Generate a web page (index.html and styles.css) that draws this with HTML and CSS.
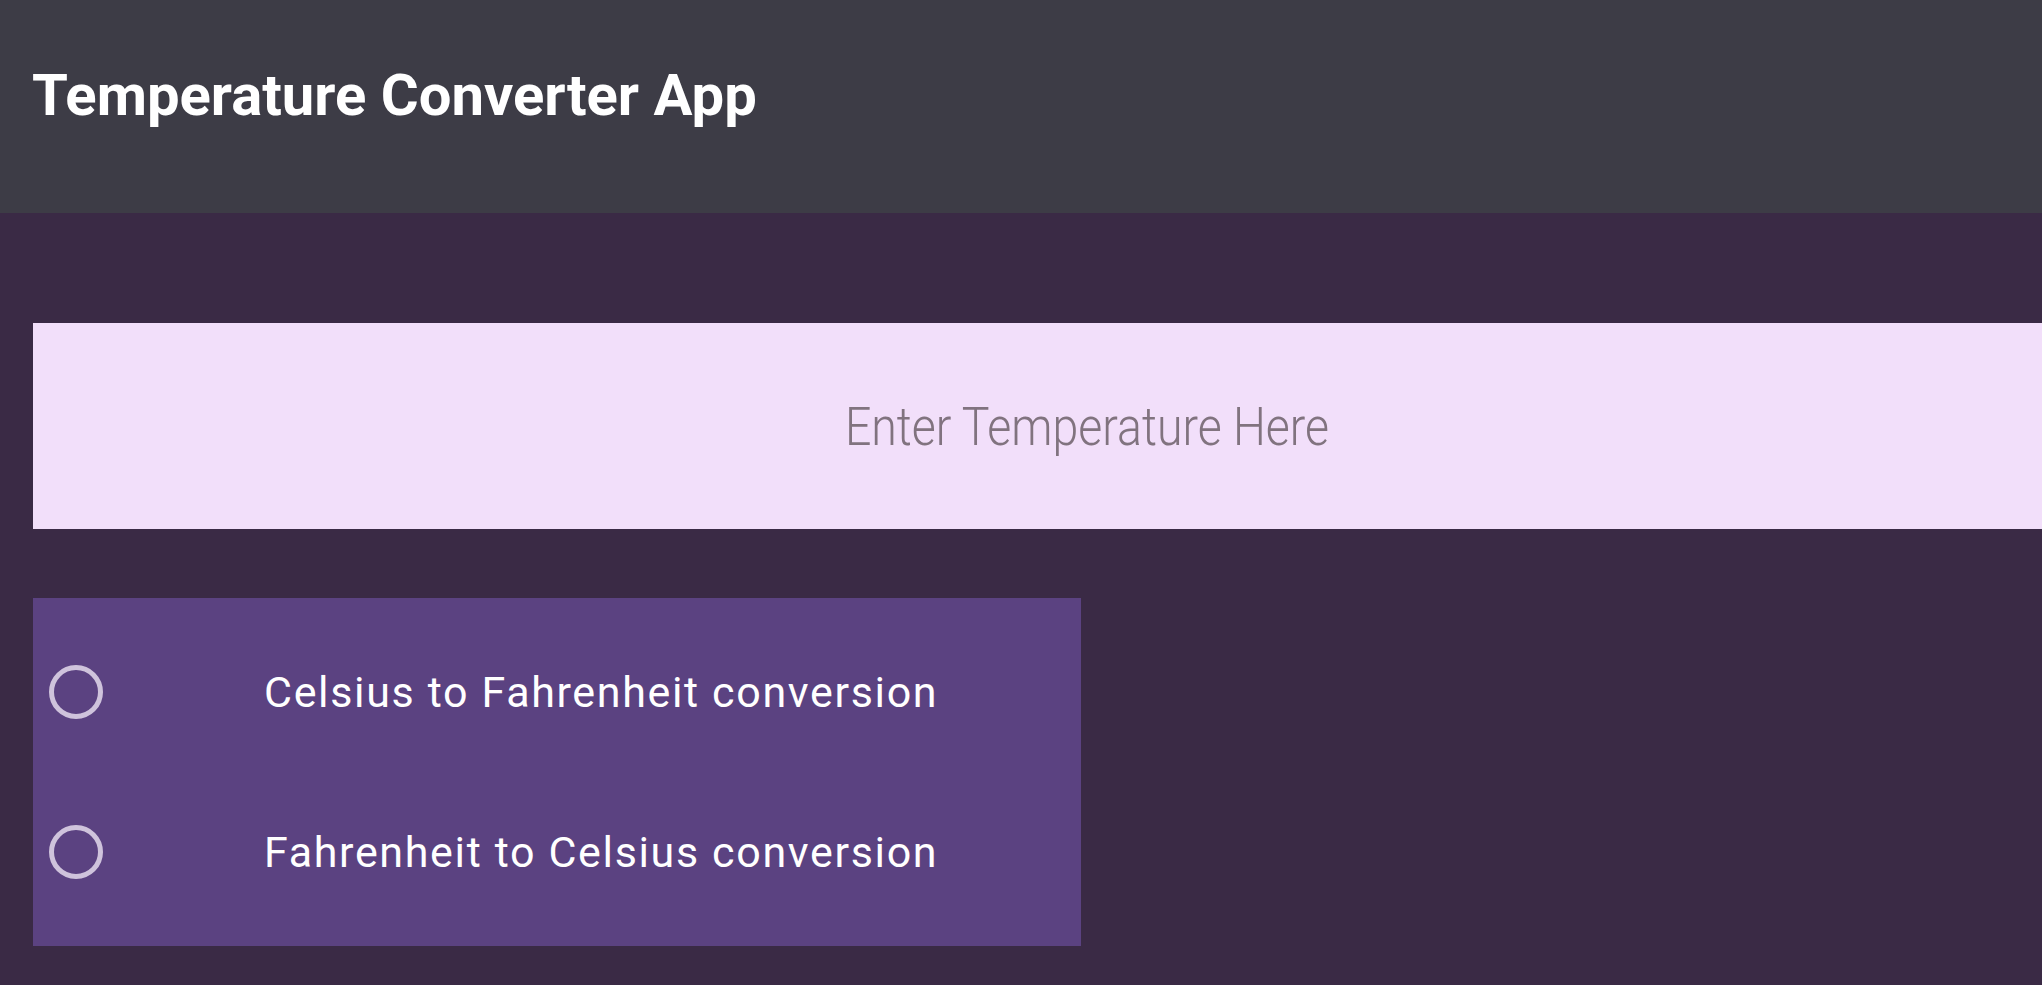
FILE: index.html
```html
<!DOCTYPE html>
<html lang="en">
<head>
<meta charset="utf-8">
<title>Temperature Converter App</title>
<link rel="stylesheet" href="styles.css">
</head>
<body>
<header class="app-bar">
  <h1 class="app-title">Temperature Converter App</h1>
</header>
<main class="content">
  <div class="field">
    <input class="temp-input" type="text" placeholder="Enter Temperature Here">
  </div>
  <div class="radio-group">
    <label class="radio-row">
      <span class="radio-circle"></span>
      <span class="radio-text">Celsius to Fahrenheit conversion</span>
    </label>
    <label class="radio-row">
      <span class="radio-circle"></span>
      <span class="radio-text">Fahrenheit to Celsius conversion</span>
    </label>
  </div>
</main>
</body>
</html>
```
FILE: styles.css
```css
html, body {
  margin: 0;
  padding: 0;
  height: 100%;
  overflow: hidden;
}
body {
  background: #3a2a45;
  font-family: Roboto, "Noto Sans", sans-serif;
}
.app-bar {
  height: 213px;
  background: #3d3c46;
  display: flex;
  align-items: center;
  padding-left: 32px;
  box-sizing: border-box;
}
.app-title {
  margin: 0;
  margin-top: -23px;
  color: #ffffff;
  font-size: 58px;
  font-weight: 700;
  line-height: 1;
}
.content {
  padding: 110px 0 0 33px;
}
.field {
  width: 2108px;
  height: 206px;
  background: #f2dffa;
  display: flex;
  overflow: hidden;
}
.temp-input {
  flex: 1;
  border: none;
  outline: none;
  background: transparent;
  text-align: center;
  font-family: Roboto, sans-serif;
  font-weight: 300;
  font-size: 54px;
  color: #81737f;
  padding: 0;
  margin: 0;
  transform: scaleX(0.86);
  transform-origin: center;
}
.temp-input::placeholder {
  color: #81737f;
  opacity: 1;
}
.radio-group {
  margin-top: 69px;
  width: 1048px;
  background: #5b4281;
  padding: 14px 0;
  display: flex;
  flex-direction: column;
}
.radio-row {
  height: 160px;
  display: flex;
  align-items: center;
  padding-left: 16px;
}
.radio-circle {
  width: 44px;
  height: 44px;
  border: 5px solid #cfc3dc;
  border-radius: 50%;
  flex: none;
}
.radio-text {
  margin-left: 161px;
  color: #ffffff;
  font-size: 43px;
  font-weight: 400;
  letter-spacing: 1.65px;
}
```
